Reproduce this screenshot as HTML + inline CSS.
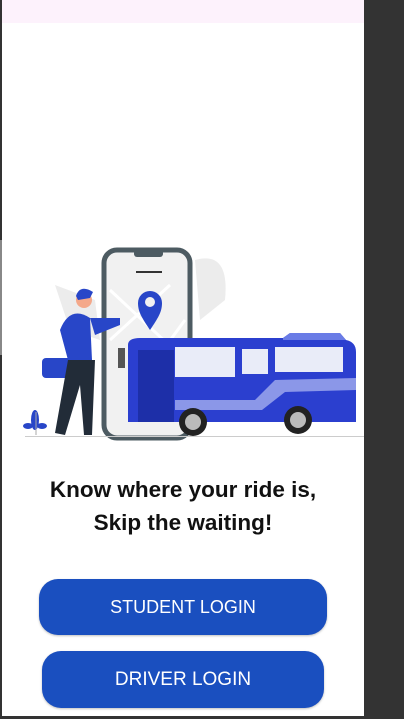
<html><head><style>
body{margin:0;width:404px;height:719px;background:#333;position:relative;overflow:hidden;font-family:"Liberation Sans",sans-serif}
#s{position:absolute;left:2px;top:0;width:362px;height:716px;background:#fff}
#sb{position:absolute;left:2px;top:0;width:362px;height:23px;background:#fdf2fc}
h1{position:absolute;left:2px;width:362px;top:473px;margin:0;text-align:center;font-size:22.5px;line-height:33px;font-weight:bold;color:#111}
.b{position:absolute;background:#1a4fbf;color:#fff;border-radius:19px;text-align:center;font-size:18px;box-shadow:0 1px 2px rgba(0,0,0,.25)}
</style></head><body>
<div id="s"></div><div id="sb"></div>
<div style="position:absolute;left:0;top:240px;width:2px;height:115px;background:#888"></div>
<svg style="position:absolute;left:0;top:0" width="404" height="719">
<g fill="#ececec">
<path d="M55 285 L95 300 L100 340 L70 330Z"/>
<path d="M195 260 Q230 250 225 300 L200 320Z"/>
</g>
<rect x="104" y="250" width="86" height="188" rx="13" fill="#f1f1f1" stroke="#4d5b62" stroke-width="5"/>
<rect x="134" y="250" width="29" height="7" rx="3" fill="#4d5b62"/>
<rect x="136" y="271" width="26" height="2" fill="#333"/>
<g stroke="#fff" stroke-width="3" fill="none"><path d="M110 290 L185 360 M110 340 L170 285 M130 395 L185 320"/></g>
<path d="M150 330 C142 318 138 312 138 303 A12 12 0 0 1 162 303 C162 312 158 318 150 330Z" fill="#2846c8"/>
<circle cx="150" cy="302" r="5" fill="#f1f1f1"/>
<ellipse cx="35" cy="420" rx="4" ry="10" fill="#2846c8"/><ellipse cx="28" cy="426" rx="5" ry="3" fill="#2846c8"/><ellipse cx="42" cy="426" rx="5" ry="3" fill="#2846c8"/><path d="M36 435 V412" stroke="#aaa"/>
<rect x="42" y="358" width="30" height="20" rx="4" fill="#2846c8"/>
<path d="M60 330 Q70 305 90 318 L92 360 L68 360Z" fill="#2846c8"/>
<path d="M90 318 L120 318 L120 325 L95 335Z" fill="#2846c8"/>
<circle cx="84" cy="300" r="8" fill="#f4a88a"/><path d="M76 296 Q80 284 93 292 L90 298 L78 300Z" fill="#2846c8"/>
<path d="M68 360 L95 360 L92 435 L84 435 L80 385 L65 435 L55 433Z" fill="#222c38"/>
<path d="M128 345 Q128 338 140 338 L283 338 L290 333 L340 333 L346 340 Q356 342 356 352 L356 422 L128 422Z" fill="#2b3fcf"/>
<path d="M283 338 L290 333 L340 333 L346 340 L283 340Z" fill="#6a7ce6"/>
<rect x="138" y="350" width="36" height="72" fill="#1d2fa8"/>
<rect x="175" y="347" width="60" height="30" fill="#e9ecf8"/>
<rect x="242" y="349" width="26" height="25" fill="#e9ecf8"/>
<rect x="275" y="347" width="68" height="25" fill="#e9ecf8"/>
<path d="M175 400 L255 400 L275 380 L356 378 L356 390 L285 392 L262 410 L175 410Z" fill="#8b97e8"/>
<rect x="118" y="348" width="7" height="20" fill="#555"/>
<circle cx="193" cy="422" r="14" fill="#222"/><circle cx="193" cy="422" r="8" fill="#bbb"/>
<circle cx="298" cy="420" r="14" fill="#222"/><circle cx="298" cy="420" r="8" fill="#bbb"/>
<rect x="25" y="436" width="339" height="1" fill="#ccc"/>
</svg>
<h1>Know where your ride is,<br>Skip the waiting!</h1>
<div class="b" style="left:39px;top:579px;width:288px;height:56px;line-height:56px">STUDENT LOGIN</div>
<div class="b" style="left:42px;top:651px;width:282px;height:57px;line-height:57px;font-size:19px">DRIVER LOGIN</div>
</body></html>
